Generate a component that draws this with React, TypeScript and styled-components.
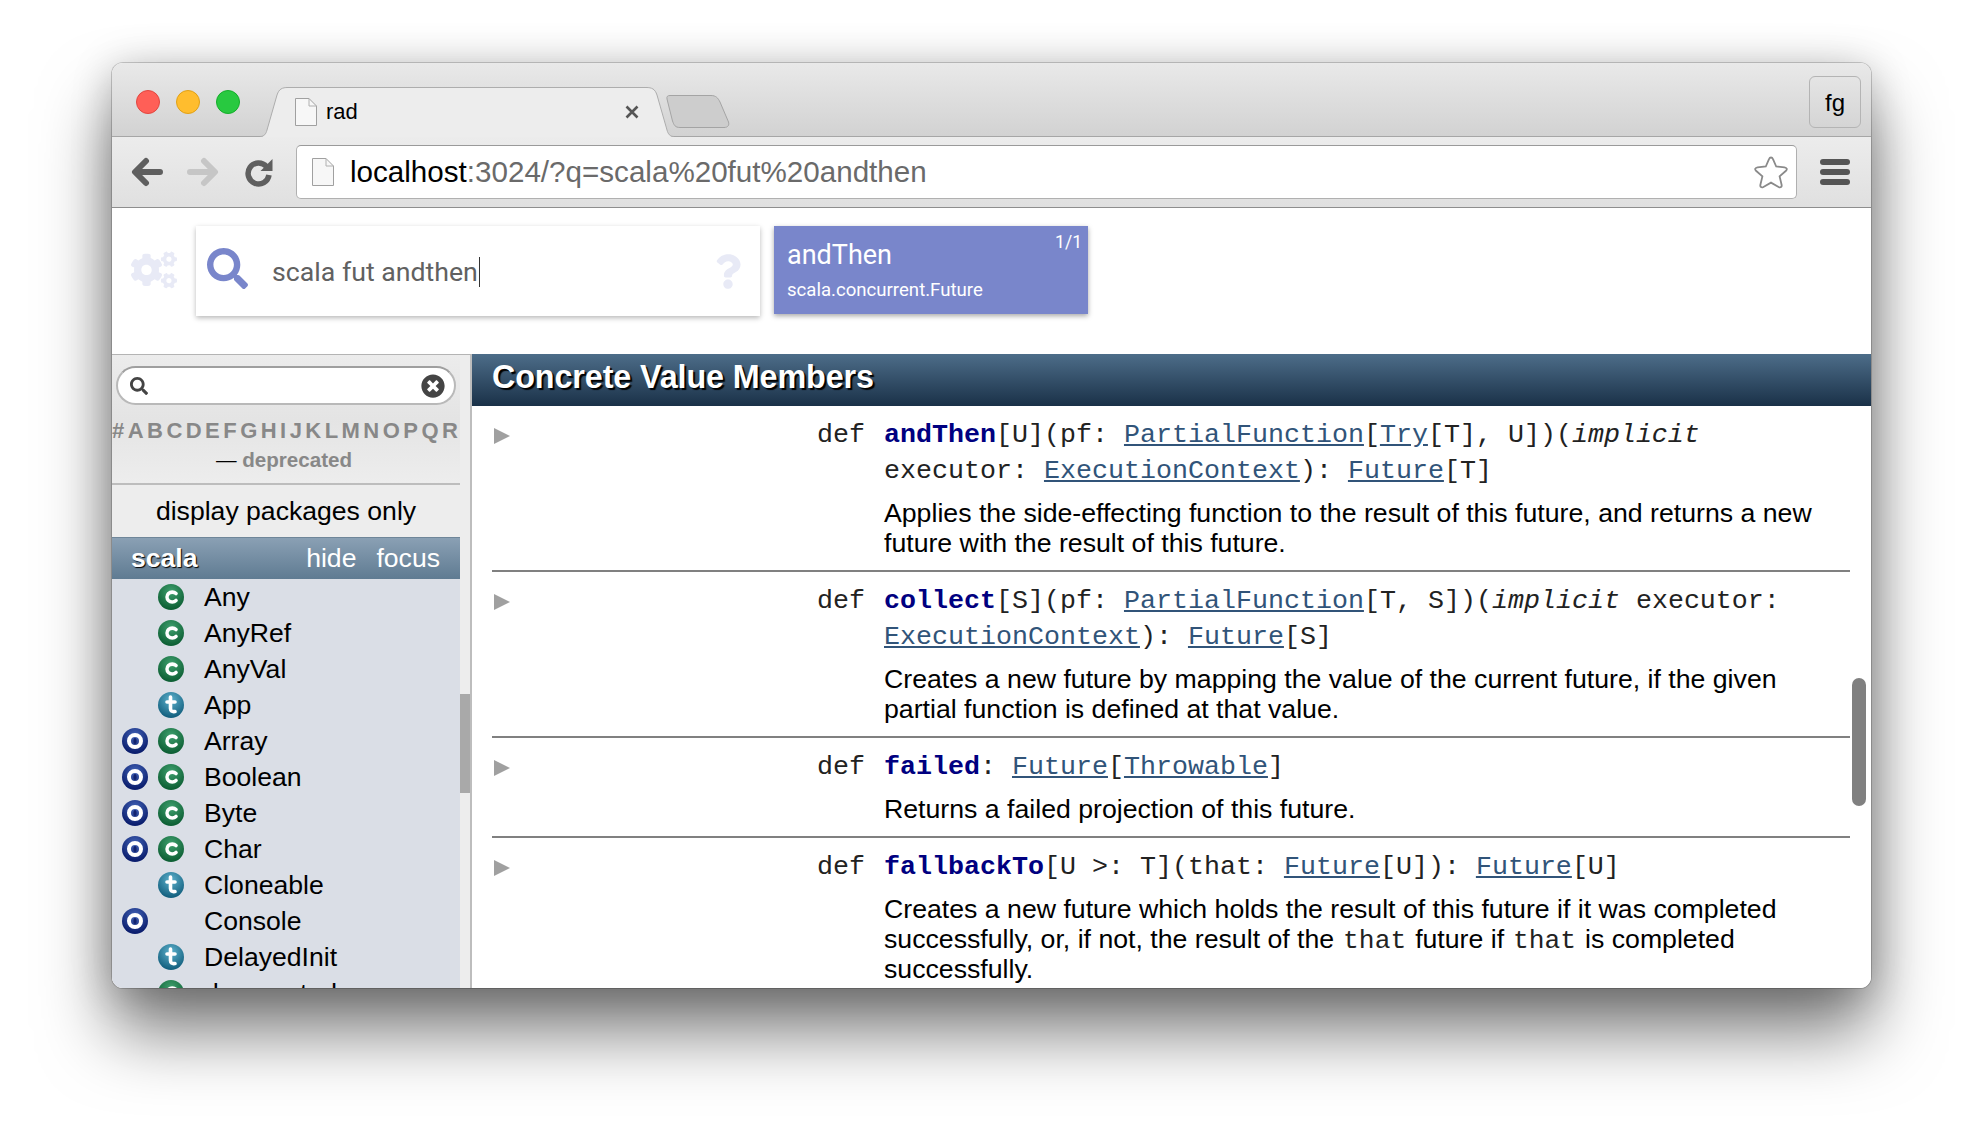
import React from "react";
import styled, { createGlobalStyle } from "styled-components";
import { FaCogs, FaSearch, FaQuestion, FaTimesCircle } from "react-icons/fa";

const GlobalStyle = createGlobalStyle`
  html, body {
    margin: 0;
    padding: 0;
    background: #fff;
    font-family: "Liberation Sans", Arial, sans-serif;
  }
`;

const Stage = styled.div`
  width: 1982px;
  height: 1148px;
  padding: 63px 0 0 112px;
  box-sizing: border-box;
  overflow: hidden;
`;

const Window = styled.div`
  width: 1759px;
  height: 925px;
  display: flex;
  flex-direction: column;
  border-radius: 11px;
  overflow: hidden;
  box-shadow: 0 44px 70px 0 rgba(0, 0, 0, 0.52), 0 0 0 1px rgba(0, 0, 0, 0.18), 0 4px 40px rgba(0, 0, 0, 0.22);
`;

const TabStrip = styled.div`
  height: 74px;
  flex: none;
  box-sizing: border-box;
  display: flex;
  align-items: flex-end;
  padding: 0 10px 0 24px;
  background: linear-gradient(#e9e9e9, #d2d2d2);
  border-bottom: 1px solid #a6a6a6;
`;

const Lights = styled.div`
  display: flex;
  gap: 16px;
  align-self: flex-start;
  margin-top: 27px;
`;

const Light = styled.span<{ $color: string; $edge: string }>`
  width: 24px;
  height: 24px;
  border-radius: 50%;
  box-sizing: border-box;
  background: ${({ $color }) => $color};
  border: 1px solid ${({ $edge }) => $edge};
`;

const Tab = styled.div`
  position: relative;
  width: 414px;
  height: 50px;
  margin: 0 0 -1px 20px;
  display: flex;
  align-items: center;
  padding: 0 35px 0 35px;
  box-sizing: border-box;
  z-index: 1;
`;

const TabShape = styled.svg`
  position: absolute;
  left: 0;
  top: 0;
  width: 414px;
  height: 50px;
  z-index: -1;
`;

const TabTitle = styled.span`
  font-size: 22px;
  color: #000;
  margin-left: 9px;
  flex: 1;
`;

const NewTab = styled.svg`
  width: 64px;
  height: 33px;
  margin: 0 0 8px -8px;
`;

const ProfileButton = styled.div`
  width: 52px;
  height: 52px;
  margin: 0 0 8px auto;
  padding-top: 2px;
  box-sizing: border-box;
  display: flex;
  align-items: center;
  justify-content: center;
  border: 1px solid #b4b4b4;
  border-radius: 6px;
  font-size: 24px;
  color: #000;
`;

const Toolbar = styled.div`
  height: 71px;
  flex: none;
  box-sizing: border-box;
  display: flex;
  align-items: center;
  padding: 0 20px 0 19px;
  background: linear-gradient(#ececec, #e0e0e0);
  border-bottom: 1px solid #8e8e8e;
`;

const NavIcon = styled.svg<{ $gap: number }>`
  flex: none;
  margin-left: ${({ $gap }) => $gap}px;
`;

const Omnibox = styled.div`
  width: 1501px;
  height: 54px;
  margin-left: 23px;
  box-sizing: border-box;
  display: flex;
  align-items: center;
  padding: 0 7px 0 15px;
  background: #fff;
  border: 1px solid #b0b0b0;
  border-top-color: #9a9a9a;
  border-radius: 5px;
`;

const UrlText = styled.div`
  flex: 1;
  margin-left: 16px;
  font-size: 29.6px;
  color: #6a6a6a;
  white-space: nowrap;
`;

const UrlHost = styled.span`
  color: #000;
`;

const MenuBars = styled.div`
  width: 30px;
  display: flex;
  flex-direction: column;
  gap: 4px;
  margin-left: 23px;
`;

const MenuBar = styled.span`
  height: 6px;
  border-radius: 3px;
  background: #555;
`;

const SearchHeader = styled.div`
  height: 146px;
  flex: none;
  box-sizing: border-box;
  display: flex;
  align-items: flex-start;
  padding: 18px 0 0 19px;
  background: #fff;
`;

const Cogs = styled(FaCogs)`
  width: 46px;
  height: 46px;
  margin: 21px 19px 0 0;
  color: #e8eaf6;
`;

const SearchBox = styled.div`
  width: 564px;
  height: 90px;
  box-sizing: border-box;
  display: flex;
  align-items: center;
  padding: 0 19px 0 11px;
  background: #fff;
  box-shadow: 0 2px 5px rgba(0, 0, 0, 0.28);
`;

const SearchGlass = styled(FaSearch)`
  width: 41px;
  height: 41px;
  color: #7986cb;
  margin-top: -6px;
  flex: none;
`;

const Query = styled.div`
  flex: 1;
  margin-left: 24px;
  padding-top: 2px;
  font-family: Roboto, sans-serif;
  font-size: 26.7px;
  color: #616161;
  display: flex;
  align-items: center;
`;

const Caret = styled.span`
  width: 1.5px;
  height: 30px;
  margin-left: 1px;
  background: #333;
`;

const HelpMark = styled(FaQuestion)`
  width: 26px;
  height: 35px;
  color: #e8eaf6;
`;

const ResultCard = styled.div`
  position: relative;
  width: 314px;
  height: 88px;
  margin-left: 14px;
  box-sizing: border-box;
  padding: 11px 13px 0;
  background: #7986cb;
  color: #fff;
  font-family: Roboto, sans-serif;
  box-shadow: 0 2px 5px rgba(0, 0, 0, 0.35);
`;

const ResultName = styled.div`
  font-size: 27px;
  line-height: 36px;
`;

const ResultPath = styled.div`
  font-size: 18.6px;
  line-height: 24px;
  margin-top: 5px;
`;

const ResultCount = styled.span`
  position: absolute;
  top: 6px;
  right: 6px;
  font-size: 17.5px;
`;

const Body = styled.div`
  flex: 1;
  min-height: 0;
  display: flex;
`;

const Sidebar = styled.div`
  width: 360px;
  flex: none;
  display: flex;
  box-sizing: border-box;
  background: #ededed;
  border-top: 1px solid #b4b4b4;
  border-right: 2px solid #bdbdbd;
  overflow: hidden;
`;

const SideColumn = styled.div`
  width: 348px;
  flex: none;
  display: flex;
  flex-direction: column;
`;

const SideTop = styled.div`
  height: 130px;
  flex: none;
  box-sizing: border-box;
  padding: 11px 0 0;
  display: flex;
  flex-direction: column;
  align-items: center;
  background: linear-gradient(#ececec 0%, #e4e4e4 50%, #ededed 100%);
  border-bottom: 2px solid #bdbdbd;
`;

const FilterPill = styled.div`
  width: 340px;
  height: 39px;
  align-self: flex-start;
  margin-left: 4px;
  flex: none;
  box-sizing: border-box;
  display: flex;
  align-items: center;
  justify-content: space-between;
  padding: 0 9px 0 12px;
  background: #fff;
  border: 2px solid #b9b9b9;
  border-top-color: #9f9f9f;
  border-radius: 20px;
`;

const FilterGlass = styled(FaSearch)`
  width: 18px;
  height: 18px;
  color: #444;
`;

const FilterClear = styled(FaTimesCircle)`
  width: 24px;
  height: 24px;
  color: #444;
`;

const Letters = styled.div`
  width: 346px;
  align-self: flex-start;
  margin-top: 13px;
  display: flex;
  justify-content: space-between;
  font-size: 22px;
  line-height: 26px;
  font-weight: bold;
  color: #888;
`;

const Deprecated = styled.div`
  margin-top: 3px;
  padding-right: 4px;
  font-size: 20.6px;
  line-height: 26px;
  font-weight: bold;
  color: #888;
`;

const Dash = styled.span`
  color: #000;
  font-weight: normal;
`;

const PackagesToggle = styled.div`
  height: 52px;
  flex: none;
  display: flex;
  align-items: center;
  justify-content: center;
  font-size: 26.6px;
  color: #000;
`;

const PackageBar = styled.div`
  height: 42px;
  flex: none;
  box-sizing: border-box;
  display: flex;
  align-items: center;
  padding: 0 20px 0 19px;
  gap: 20px;
  font-size: 26.6px;
  color: #fff;
  background: linear-gradient(#8aa0b4, #5f7b92);
  border-top: 1px solid #6f8699;
`;

const PackageName = styled.span`
  flex: 1;
  font-weight: bold;
  text-shadow: 1px 1px 1px #000;
`;

const EntityList = styled.div`
  flex: 1;
  min-height: 0;
  overflow: hidden;
  background: #dadee6;
`;

const EntityRow = styled.div`
  height: 36px;
  display: flex;
  align-items: center;
  padding-left: 10px;
  font-size: 26.6px;
  color: #000;
`;

const BadgeSlot = styled.span`
  width: 26px;
  height: 26px;
  margin-right: 10px;
  flex: none;
`;

const Badge = styled.span<{ $kind: "object" | "class" | "trait" }>`
  display: block;
  width: 26px;
  height: 26px;
  border-radius: 50%;
  background: ${({ $kind }) =>
    $kind === "object"
      ? "radial-gradient(circle at 50% 30%, #4465b8, #0b1e6e 75%)"
      : $kind === "class"
        ? "radial-gradient(circle at 50% 30%, #3fa06e, #0d5f34 78%)"
        : "radial-gradient(circle at 50% 30%, #5eb1cc, #13607f 78%)"};
`;

const EntityName = styled.span`
  margin-left: 10px;
`;

const SideTrack = styled.div`
  flex: 1;
`;

const SideThumb = styled.div`
  height: 99px;
  margin-top: 339px;
  background: #a9a9a9;
`;

const Main = styled.div`
  position: relative;
  flex: 1;
  min-width: 0;
  background: #fff;
  overflow: hidden;
`;

const SectionTitle = styled.h3`
  margin: 0;
  height: 52px;
  box-sizing: border-box;
  padding: 0 0 5px 20px;
  display: flex;
  align-items: center;
  font-size: 32.3px;
  letter-spacing: -0.1px;
  font-weight: bold;
  color: #fff;
  text-shadow: 2px 2px 1px #000;
  background: linear-gradient(#4d6d89, #1a3148);
`;

const Members = styled.div`
  width: 1358px;
  margin-left: 20px;
`;

const Member = styled.div`
  display: grid;
  grid-template-columns: 373px 1fr;
  column-gap: 19px;
  padding: 10px 0 12px;
  border-bottom: 2px solid #808080;

  &:last-child {
    border-bottom: none;
  }
`;

const Lead = styled.div`
  display: flex;
  justify-content: space-between;
  height: 36px;
  font-family: "Liberation Mono", monospace;
  font-size: 26.67px;
  line-height: 38px;
  color: #222;
`;

const Expander = styled.span`
  width: 0;
  height: 0;
  margin: 12px 0 0 2px;
  border-left: 16px solid #a0a0a0;
  border-top: 8px solid transparent;
  border-bottom: 8px solid transparent;
  filter: blur(0.5px);
`;

const Signature = styled.div`
  font-family: "Liberation Mono", monospace;
  font-size: 26.67px;
  line-height: 36px;
  padding-top: 1px;
  margin-bottom: -1px;
  color: #222;
`;

const MemberName = styled.span`
  font-weight: bold;
  color: #000080;
`;

const TypeLink = styled.a`
  color: #315479;
  text-decoration: underline;
`;

const Doc = styled.p`
  grid-column: 2;
  margin: 10px 0 0;
  font-size: 26.68px;
  line-height: 30px;
  color: #000;
`;

const Code = styled.code`
  font-family: "Liberation Mono", monospace;
  font-size: 26.3px;
  line-height: 1;
  padding: 0 1.5px;
  color: #222;
`;

const MainThumb = styled.div`
  position: absolute;
  top: 324px;
  right: 5px;
  width: 14px;
  height: 128px;
  border-radius: 7px;
  background: #808080;
`;

type EntityProps = { name: string; object?: boolean; kind?: "class" | "trait" };

const ENTITIES: EntityProps[] = [
  { name: "Any", kind: "class" },
  { name: "AnyRef", kind: "class" },
  { name: "AnyVal", kind: "class" },
  { name: "App", kind: "trait" },
  { name: "Array", object: true, kind: "class" },
  { name: "Boolean", object: true, kind: "class" },
  { name: "Byte", object: true, kind: "class" },
  { name: "Char", object: true, kind: "class" },
  { name: "Cloneable", kind: "trait" },
  { name: "Console", object: true },
  { name: "DelayedInit", kind: "trait" },
  { name: "deprecated", kind: "class" },
];

const ObjectBadge = () => (
  <Badge $kind="object">
    <svg width="26" height="26" viewBox="0 0 26 26">
      <circle cx="13" cy="13" r="6" fill="none" stroke="#fff" strokeWidth="4" />
      <ellipse cx="13" cy="13" rx="1.6" ry="3" fill="#12236f" />
    </svg>
  </Badge>
);

const ClassBadge = () => (
  <Badge $kind="class">
    <svg width="26" height="26" viewBox="0 0 26 26">
      <path d="M18 9.5C16 7.6 12.5 7.6 10.5 9.5C8.6 11.5 8.6 14.6 10.5 16.5C12.5 18.4 16 18.4 18 16.5" fill="none" stroke="#fff" strokeWidth="3.6" strokeLinecap="round" />
    </svg>
  </Badge>
);

const TraitBadge = () => (
  <Badge $kind="trait">
    <svg width="26" height="26" viewBox="0 0 26 26">
      <path d="M12.5 5V16.5C12.5 19 14 20 17 19.5M9 10H17" fill="none" stroke="#fff" strokeWidth="3.6" strokeLinecap="round" />
    </svg>
  </Badge>
);

const Entity = ({ name, object, kind }: EntityProps) => (
  <EntityRow>
    <BadgeSlot>{object && <ObjectBadge />}</BadgeSlot>
    <BadgeSlot>
      {kind === "class" && <ClassBadge />}
      {kind === "trait" && <TraitBadge />}
    </BadgeSlot>
    <EntityName>{name}</EntityName>
  </EntityRow>
);

const PageIcon = ({ w, h }: { w: number; h: number }) => (
  <svg width={w} height={h} viewBox="0 0 22 28" style={{ flex: "none" }}>
    <path d="M.5.5H14L21.5 8V27.5H.5Z" fill="#f7f7f7" stroke="#a0a0a0" />
    <path d="M14 .5V8H21.5" fill="none" stroke="#b0b0b0" />
  </svg>
);

const App = () => {
  return (
    <>
      <GlobalStyle />
      <Stage>
        <Window>
          <TabStrip>
            <Lights>
              <Light $color="#ff5f57" $edge="#e2463f" />
              <Light $color="#ffbd2e" $edge="#e1a116" />
              <Light $color="#28c940" $edge="#14ae2a" />
            </Lights>
            <Tab>
              <TabShape viewBox="0 0 414 50">
                <path d="M0 50C4 50 6 47 7 43L17 8C19 2 22 .5 28 .5H386C392 .5 395 2 397 8L407 43C408 47 410 50 414 50Z" fill="#ededed" />
                <path d="M0 49.5C4 49.5 6 47 7 43L17 8C19 2 22 .5 28 .5H386C392 .5 395 2 397 8L407 43C408 47 410 49.5 414 49.5" fill="none" stroke="#adadad" />
              </TabShape>
              <PageIcon w={22} h={28} />
              <TabTitle>rad</TabTitle>
              <svg width="14" height="14" viewBox="0 0 14 14">
                <path d="M1.5 1.5L12.5 12.5M12.5 1.5L1.5 12.5" stroke="#555" strokeWidth="2.6" />
              </svg>
            </Tab>
            <NewTab viewBox="0 0 64 33">
              <path d="M4 .5H45C50 .5 52 3 54 7L62.5 27C63.5 30 62 32.5 58 32.5H14C9 32.5 8 30 6.5 26L1 4C.5 1.5 1.5 .5 4 .5Z" fill="#cdcdcd" stroke="#a4a4a4" />
            </NewTab>
            <ProfileButton>fg</ProfileButton>
          </TabStrip>
          <Toolbar>
            <NavIcon $gap={0} width="32" height="30" viewBox="0 0 32 30">
              <path d="M29 15H5M15 4L4 15L15 26" fill="none" stroke="#5f5f5f" strokeWidth="6" strokeLinecap="round" strokeLinejoin="round" />
            </NavIcon>
            <NavIcon $gap={24} width="32" height="30" viewBox="0 0 32 30">
              <path d="M3 15H27M17 4L28 15L17 26" fill="none" stroke="#c6c6c6" strokeWidth="6" strokeLinecap="round" strokeLinejoin="round" />
            </NavIcon>
            <NavIcon $gap={26} width="28" height="30" viewBox="0 0 28 30">
              <path d="M21.5 9.5A10.5 10.5 0 1 0 24 18" fill="none" stroke="#5f5f5f" strokeWidth="5.5" />
              <path d="M27.5 2V14H15.5Z" fill="#5f5f5f" />
            </NavIcon>
            <Omnibox>
              <PageIcon w={22} h={30} />
              <UrlText>
                <UrlHost>localhost</UrlHost>:3024/?q=scala%20fut%20andthen
              </UrlText>
              <svg width="36" height="35" viewBox="0 0 36 35">
                <path d="M18 2.5C19 2.5 19.6 3.2 20 4.2L23.2 11.5L31.5 12.3C33.8 12.6 34.5 14.5 33 15.8L26.6 21.4L28.6 29.8C29.1 32 27.5 33 25.6 32L18 27.6L10.4 32C8.5 33 6.9 32 7.4 29.8L9.4 21.4L3 15.8C1.5 14.5 2.2 12.6 4.5 12.3L12.8 11.5L16 4.2C16.4 3.2 17 2.5 18 2.5Z" fill="none" stroke="#8a8a8a" strokeWidth="1.8" />
              </svg>
            </Omnibox>
            <MenuBars>
              <MenuBar />
              <MenuBar />
              <MenuBar />
            </MenuBars>
          </Toolbar>
          <SearchHeader>
            <Cogs />
            <SearchBox>
              <SearchGlass />
              <Query>
                scala fut andthen
                <Caret />
              </Query>
              <HelpMark />
            </SearchBox>
            <ResultCard>
              <ResultName>andThen</ResultName>
              <ResultPath>scala.concurrent.Future</ResultPath>
              <ResultCount>1/1</ResultCount>
            </ResultCard>
          </SearchHeader>
          <Body>
            <Sidebar>
              <SideColumn>
                <SideTop>
                  <FilterPill>
                    <FilterGlass />
                    <FilterClear />
                  </FilterPill>
                  <Letters>
                    {"#ABCDEFGHIJKLMNOPQR".split("").map((letter) => (
                      <span key={letter}>{letter}</span>
                    ))}
                  </Letters>
                  <Deprecated>
                    <Dash>—</Dash> deprecated
                  </Deprecated>
                </SideTop>
                <PackagesToggle>display packages only</PackagesToggle>
                <PackageBar>
                  <PackageName>scala</PackageName>
                  <span>hide</span>
                  <span>focus</span>
                </PackageBar>
                <EntityList>
                  {ENTITIES.map((entity) => (
                    <Entity key={entity.name} {...entity} />
                  ))}
                </EntityList>
              </SideColumn>
              <SideTrack>
                <SideThumb />
              </SideTrack>
            </Sidebar>
            <Main>
              <SectionTitle>Concrete Value Members</SectionTitle>
              <Members>
                <Member>
                  <Lead>
                    <Expander />
                    <span>def</span>
                  </Lead>
                  <Signature>
                    <MemberName>andThen</MemberName>[U](pf: <TypeLink>PartialFunction</TypeLink>[<TypeLink>Try</TypeLink>[T], U])(<i>implicit</i> executor: <TypeLink>ExecutionContext</TypeLink>): <TypeLink>Future</TypeLink>[T]
                  </Signature>
                  <Doc>Applies the side-effecting function to the result of this future, and returns a new future with the result of this future.</Doc>
                </Member>
                <Member>
                  <Lead>
                    <Expander />
                    <span>def</span>
                  </Lead>
                  <Signature>
                    <MemberName>collect</MemberName>[S](pf: <TypeLink>PartialFunction</TypeLink>[T, S])(<i>implicit</i> executor: <TypeLink>ExecutionContext</TypeLink>): <TypeLink>Future</TypeLink>[S]
                  </Signature>
                  <Doc>Creates a new future by mapping the value of the current future, if the given partial function is defined at that value.</Doc>
                </Member>
                <Member>
                  <Lead>
                    <Expander />
                    <span>def</span>
                  </Lead>
                  <Signature>
                    <MemberName>failed</MemberName>: <TypeLink>Future</TypeLink>[<TypeLink>Throwable</TypeLink>]
                  </Signature>
                  <Doc>Returns a failed projection of this future.</Doc>
                </Member>
                <Member>
                  <Lead>
                    <Expander />
                    <span>def</span>
                  </Lead>
                  <Signature>
                    <MemberName>fallbackTo</MemberName>[U &gt;: T](that: <TypeLink>Future</TypeLink>[U]): <TypeLink>Future</TypeLink>[U]
                  </Signature>
                  <Doc>
                    Creates a new future which holds the result of this future if it was completed successfully, or, if not, the result of the <Code>that</Code> future if <Code>that</Code> is completed successfully.
                  </Doc>
                </Member>
              </Members>
              <MainThumb />
            </Main>
          </Body>
        </Window>
      </Stage>
    </>
  );
};

export default App;
